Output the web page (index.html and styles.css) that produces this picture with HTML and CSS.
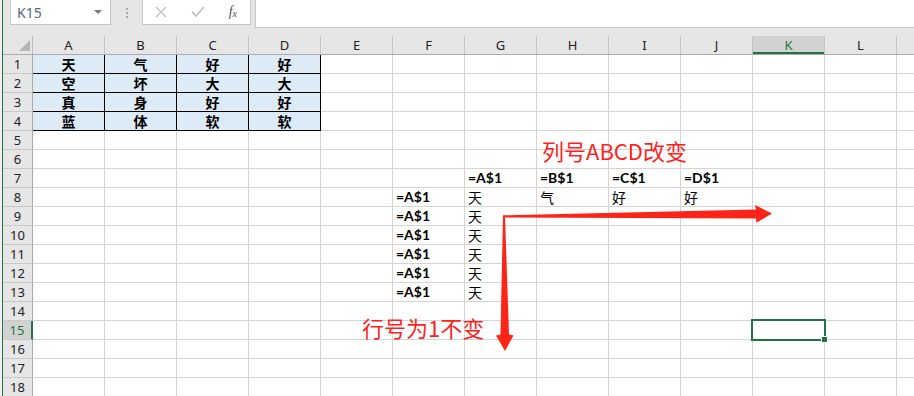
FILE: index.html
```html
<!DOCTYPE html>
<html lang="zh-CN">
<head>
    <meta charset="UTF-8">
    <title>相对引用与混合引用</title>
    <link rel="stylesheet" href="styles.css">
</head>
<body>
<div class="window">
    <div class="toolbar">
        <div class="namebox"><span>K15</span><span class="dd"></span></div>
        <div class="grip"><i></i><i></i><i></i></div>
        <div class="fnbox">
            <svg width="12" height="12" viewBox="0 0 12 12"><path d="M1 1 L11 11 M11 1 L1 11" stroke="#c2c2c2" stroke-width="1.4" fill="none"/></svg>
            <svg width="14" height="12" viewBox="0 0 14 12"><path d="M1 6 L5 10 L13 1" stroke="#c2c2c2" stroke-width="1.8" fill="none"/></svg>
            <span class="fx">f<sub>x</sub></span>
        </div>
        <div class="formula"></div>
    </div>

    <div class="colhead">
        <div class="corner"><span class="tri"></span></div>
        <div class="ch">A</div>
        <div class="ch">B</div>
        <div class="ch">C</div>
        <div class="ch">D</div>
        <div class="ch">E</div>
        <div class="ch">F</div>
        <div class="ch">G</div>
        <div class="ch">H</div>
        <div class="ch">I</div>
        <div class="ch">J</div>
        <div class="ch sel">K</div>
        <div class="ch">L</div>
        <div class="ch m"></div>
    </div>

    <div class="row"><div class="rh">1</div><div class="c d">天</div><div class="c d">气</div><div class="c d">好</div><div class="c d">好</div><div class="c"></div><div class="c"></div><div class="c"></div><div class="c"></div><div class="c"></div><div class="c"></div><div class="c"></div><div class="c"></div><div class="c m"></div></div>
    <div class="row"><div class="rh">2</div><div class="c d">空</div><div class="c d">坏</div><div class="c d">大</div><div class="c d">大</div><div class="c"></div><div class="c"></div><div class="c"></div><div class="c"></div><div class="c"></div><div class="c"></div><div class="c"></div><div class="c"></div><div class="c m"></div></div>
    <div class="row"><div class="rh">3</div><div class="c d">真</div><div class="c d">身</div><div class="c d">好</div><div class="c d">好</div><div class="c"></div><div class="c"></div><div class="c"></div><div class="c"></div><div class="c"></div><div class="c"></div><div class="c"></div><div class="c"></div><div class="c m"></div></div>
    <div class="row"><div class="rh">4</div><div class="c d">蓝</div><div class="c d">体</div><div class="c d">软</div><div class="c d">软</div><div class="c"></div><div class="c"></div><div class="c"></div><div class="c"></div><div class="c"></div><div class="c"></div><div class="c"></div><div class="c"></div><div class="c m"></div></div>
    <div class="row"><div class="rh">5</div><div class="c"></div><div class="c"></div><div class="c"></div><div class="c"></div><div class="c"></div><div class="c"></div><div class="c"></div><div class="c"></div><div class="c"></div><div class="c"></div><div class="c"></div><div class="c"></div><div class="c m"></div></div>
    <div class="row"><div class="rh">6</div><div class="c"></div><div class="c"></div><div class="c"></div><div class="c"></div><div class="c"></div><div class="c"></div><div class="c"></div><div class="c"></div><div class="c"></div><div class="c"></div><div class="c"></div><div class="c"></div><div class="c m"></div></div>
    <div class="row"><div class="rh">7</div><div class="c"></div><div class="c"></div><div class="c"></div><div class="c"></div><div class="c"></div><div class="c"></div><div class="c f">=A$1</div><div class="c f">=B$1</div><div class="c f">=C$1</div><div class="c f">=D$1</div><div class="c"></div><div class="c"></div><div class="c m"></div></div>
    <div class="row"><div class="rh">8</div><div class="c"></div><div class="c"></div><div class="c"></div><div class="c"></div><div class="c"></div><div class="c f">=A$1</div><div class="c">天</div><div class="c">气</div><div class="c">好</div><div class="c">好</div><div class="c"></div><div class="c"></div><div class="c m"></div></div>
    <div class="row"><div class="rh">9</div><div class="c"></div><div class="c"></div><div class="c"></div><div class="c"></div><div class="c"></div><div class="c f">=A$1</div><div class="c">天</div><div class="c"></div><div class="c"></div><div class="c"></div><div class="c"></div><div class="c"></div><div class="c m"></div></div>
    <div class="row"><div class="rh">10</div><div class="c"></div><div class="c"></div><div class="c"></div><div class="c"></div><div class="c"></div><div class="c f">=A$1</div><div class="c">天</div><div class="c"></div><div class="c"></div><div class="c"></div><div class="c"></div><div class="c"></div><div class="c m"></div></div>
    <div class="row"><div class="rh">11</div><div class="c"></div><div class="c"></div><div class="c"></div><div class="c"></div><div class="c"></div><div class="c f">=A$1</div><div class="c">天</div><div class="c"></div><div class="c"></div><div class="c"></div><div class="c"></div><div class="c"></div><div class="c m"></div></div>
    <div class="row"><div class="rh">12</div><div class="c"></div><div class="c"></div><div class="c"></div><div class="c"></div><div class="c"></div><div class="c f">=A$1</div><div class="c">天</div><div class="c"></div><div class="c"></div><div class="c"></div><div class="c"></div><div class="c"></div><div class="c m"></div></div>
    <div class="row"><div class="rh">13</div><div class="c"></div><div class="c"></div><div class="c"></div><div class="c"></div><div class="c"></div><div class="c f">=A$1</div><div class="c">天</div><div class="c"></div><div class="c"></div><div class="c"></div><div class="c"></div><div class="c"></div><div class="c m"></div></div>
    <div class="row"><div class="rh">14</div><div class="c"></div><div class="c"></div><div class="c"></div><div class="c"></div><div class="c"></div><div class="c"></div><div class="c"></div><div class="c"></div><div class="c"></div><div class="c"></div><div class="c"></div><div class="c"></div><div class="c m"></div></div>
    <div class="row"><div class="rh sel">15</div><div class="c"></div><div class="c"></div><div class="c"></div><div class="c"></div><div class="c"></div><div class="c"></div><div class="c"></div><div class="c"></div><div class="c"></div><div class="c"></div><div class="c active"></div><div class="c"></div><div class="c m"></div></div>
    <div class="row"><div class="rh">16</div><div class="c"></div><div class="c"></div><div class="c"></div><div class="c"></div><div class="c"></div><div class="c"></div><div class="c"></div><div class="c"></div><div class="c"></div><div class="c"></div><div class="c"></div><div class="c"></div><div class="c m"></div></div>
    <div class="row"><div class="rh">17</div><div class="c"></div><div class="c"></div><div class="c"></div><div class="c"></div><div class="c"></div><div class="c"></div><div class="c"></div><div class="c"></div><div class="c"></div><div class="c"></div><div class="c"></div><div class="c"></div><div class="c m"></div></div>
    <div class="row"><div class="rh">18</div><div class="c"></div><div class="c"></div><div class="c"></div><div class="c"></div><div class="c"></div><div class="c"></div><div class="c"></div><div class="c"></div><div class="c"></div><div class="c"></div><div class="c"></div><div class="c"></div><div class="c m"></div></div>
</div>

<!-- 批注：红色文字和箭头浮在表格上 -->
<div class="note note-col">列号ABCD改变</div>
<div class="note note-row">行号为1不变</div>
<svg class="arrows" width="914" height="396" viewBox="0 0 914 396">
    <polygon points="503,215.3 756,209.6 755,205 772,213.6 756.5,222.8 756,218.4 503,217.4" fill="#ff2418"/>
    <polygon points="503,216 505,216 509,334.5 513.5,335.5 505,351 496,335.5 500.5,334.5" fill="#ff2418"/>
</svg>
</body>
</html>
```

FILE: styles.css
```css
* {
    box-sizing: border-box;
}
body {
    margin: 0;
    width: 914px;
    height: 396px;
    overflow: hidden;
    position: relative;
    background-color: #f0f0f0;
    font-family: "Noto Sans", "Noto Sans CJK SC", sans-serif;
    color: #222;
}
.window {
    margin-left: 2px;
    height: 396px;
    border-left: 1px solid #217346;
    background-color: #e6e6e6;
}

/* 编辑栏 */
.toolbar {
    display: flex;
    align-items: flex-start;
    height: 30px;
}
.namebox {
    margin-left: 7px;
    width: 101px;
    height: 25px;
    background-color: #fff;
    border: 1px solid #c6c6c6;
    border-top: none;
    display: flex;
    align-items: center;
    justify-content: space-between;
    padding: 0 8px 0 6px;
    font-size: 14px;
    color: #56687a;
}
.dd {
    width: 0;
    height: 0;
    border-left: 4px solid transparent;
    border-right: 4px solid transparent;
    border-top: 4px solid #7a7a7a;
}
.grip {
    width: 31px;
    height: 25px;
    display: flex;
    flex-direction: column;
    align-items: center;
    justify-content: center;
    gap: 2px;
}
.grip i {
    display: block;
    width: 2px;
    height: 2px;
    background-color: #a9a9a9;
}
.fnbox {
    width: 109px;
    height: 25px;
    background-color: #fff;
    border: 1px solid #c6c6c6;
    border-top: none;
    display: flex;
    align-items: center;
    justify-content: space-between;
    padding: 0 13px 0 12px;
}
.fx {
    font-family: "Liberation Serif", serif;
    font-style: italic;
    font-size: 14px;
    color: #555;
}
.fx sub {
    font-size: 10px;
    vertical-align: -1px;
}
.formula {
    margin-left: 4px;
    flex: 1;
    height: 28px;
    background-color: #fff;
    border-left: 1px solid #c6c6c6;
    border-bottom: 1px solid #c6c6c6;
}

/* 列标题 */
.colhead {
    display: flex;
    height: 25px;
    border-bottom: 1px solid #ababab;
}
.corner {
    width: 30px;
    margin-top: 6px;
    border-right: 1px solid #bdbdbd;
    display: flex;
    align-items: flex-end;
    justify-content: flex-end;
    padding: 0 2px 3px 0;
}
.tri {
    width: 0;
    height: 0;
    border-left: 11px solid transparent;
    border-bottom: 11px solid #b5b5b5;
}
.ch {
    width: 72px;
    flex: none;
    margin-top: 6px;
    height: 18px;
    border-right: 1px solid #c4c4c4;
    text-align: center;
    line-height: 18px;
    font-size: 13px;
    color: #222;
}
.ch.sel {
    background-color: #d2d2d2;
    color: #217346;
    box-shadow: inset 0 -2px 0 #217346;
}
.ch.m,
.c.m {
    flex: 1;
    border-right: none;
}

/* 单元格 */
.row {
    display: flex;
    height: 19px;
}
.rh {
    width: 30px;
    flex: none;
    border-right: 1px solid #ababab;
    border-bottom: 1px solid #c9c9c9;
    text-align: center;
    line-height: 18px;
    font-size: 13px;
    color: #222;
}
.rh.sel {
    background-color: #d2d2d2;
    color: #217346;
    border-right: 2px solid #217346;
}
.c {
    width: 72px;
    flex: none;
    background-color: #fff;
    border-right: 1px solid #d4d4d4;
    border-bottom: 1px solid #d4d4d4;
    padding-left: 3px;
    font-family: "Noto Sans CJK SC", sans-serif;
    font-size: 14px;
    line-height: 18px;
    white-space: nowrap;
    color: #000;
}
.c.d {
    background-color: #ddebf7;
    border-right-color: #000;
    border-bottom-color: #000;
    padding-left: 0;
    text-align: center;
    font-weight: bold;
}
.c.f {
    font-family: "Lato", "Liberation Sans", sans-serif;
    font-weight: bold;
}
.c.active {
    position: relative;
}
.c.active::before {
    content: "";
    position: absolute;
    left: -2px;
    top: -2px;
    right: -2px;
    bottom: -2px;
    border: 2px solid #217346;
}
.c.active::after {
    content: "";
    position: absolute;
    right: -3px;
    bottom: -3px;
    width: 5px;
    height: 5px;
    background-color: #217346;
    box-shadow: 0 0 0 1px #fff;
}

/* 批注 */
.note {
    position: absolute;
    font-family: "Noto Sans CJK SC", sans-serif;
    font-size: 22px;
    line-height: 24px;
    color: #ff1f1f;
    white-space: nowrap;
}
.note-col {
    left: 542px;
    top: 138px;
}
.note-row {
    left: 362px;
    top: 315px;
}
.arrows {
    position: absolute;
    left: 0;
    top: 0;
    pointer-events: none;
}
```
